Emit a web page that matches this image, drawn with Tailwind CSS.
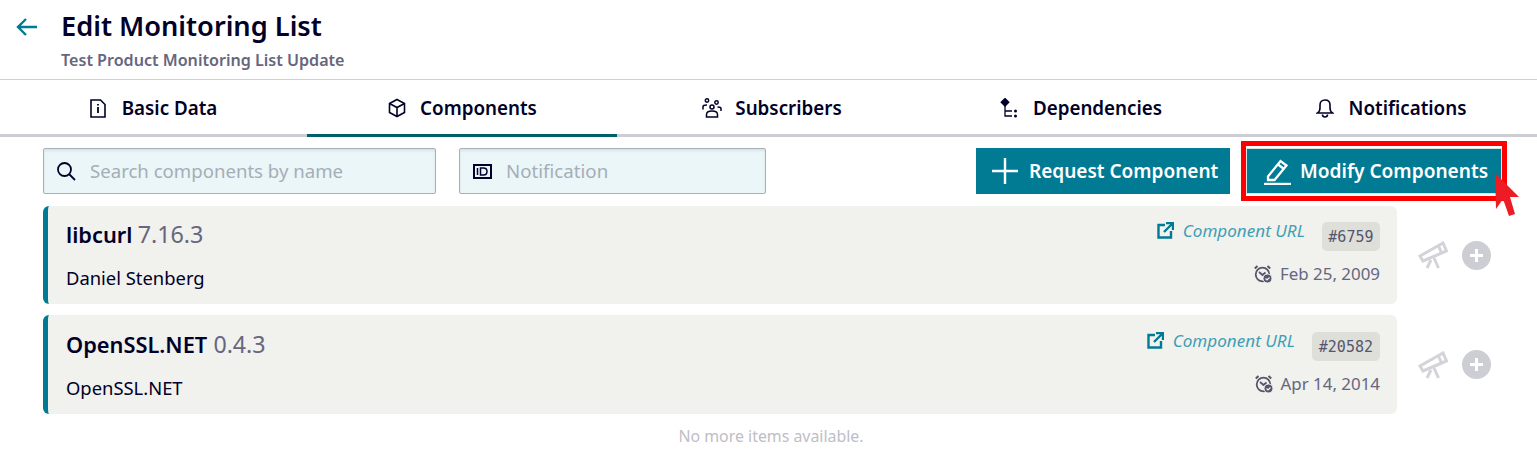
<!DOCTYPE html>
<html lang="en">
<head>
    <meta charset="UTF-8">
    <meta name="viewport" content="width=device-width, initial-scale=1.0">
    <title>Edit Monitoring List</title>
    <script src="https://cdn.jsdelivr.net/npm/@tailwindcss/browser@4"></script>
</head>
<body class="bg-white font-['Noto_Sans',sans-serif] text-[#000028] h-[455px] overflow-hidden">
    <!-- page header -->
    <header class="flex h-[80px] border-b border-[#d0d0d6]">
        <div class="w-[61px] pl-[16px] pt-[17px]">
            <svg class="w-[22px] h-[20px]" viewBox="0 0 22 20" fill="none" stroke="#007b93" stroke-width="2.4"><path d="M21 10H2M10 2l-8 8 8 8"/></svg>
        </div>
        <div>
            <h1 class="text-[27.2px] leading-[36px] font-semibold mt-[8px]">Edit Monitoring List</h1>
            <p class="text-[16.1px] leading-[20px] font-semibold text-[#66667e] mt-[6px]">Test Product Monitoring List Update</p>
        </div>
    </header>

    <!-- tabs -->
    <nav class="grid grid-cols-[307px_310px_310px_310px_310px] h-[57px] border-b-[3px] border-[#cdcdd4] overflow-visible">
        <a class="flex items-center justify-center gap-[16px] h-[57px] font-semibold text-[18.8px] pb-[1px]">
            <svg class="w-[16px] h-[19px]" viewBox="0 0 16 19" fill="none" stroke="#000028" stroke-width="1.6"><path d="M1 1h9.500L15 5.500V18H1z"/><path d="M8 8v6M8 5v1.600" stroke-width="1.800"/></svg>
            Basic Data
        </a>
        <a class="flex items-center justify-center gap-[13px] h-[57px] font-semibold text-[18.8px] pt-[2px] border-b-[3px] border-[#005f6a]">
            <svg class="w-[20px] h-[20px]" viewBox="0 0 20 20" fill="none" stroke="#000028" stroke-width="1.600"><path d="M10 1.500l7.500 4v9l-7.500 4-7.500-4v-9z"/><path d="M2.500 5.500l7.500 4 7.500-4M10 9.500v9"/></svg>
            Components
        </a>
        <a class="flex items-center justify-center gap-[13px] h-[57px] font-semibold text-[18.8px] pb-[1px]">
            <svg class="w-[20px] h-[20px]" viewBox="0 0 20 20" fill="none" stroke="#000028" stroke-width="1.500"><circle cx="5" cy="2.500" r="1.700"/><circle cx="14.500" cy="4.500" r="1.700"/><circle cx="10" cy="9" r="2"/><path d="M1 11.500V8.500c0-1 1-1.500 4-1.500M19 13V10.500c0-1-1-1.500-3.500-1.500"/><path d="M4.500 19v-2.500c0-2 2-3.500 5.500-3.500s5.500 1.500 5.500 3.500V19z"/></svg>
            Subscribers
        </a>
        <a class="flex items-center justify-center gap-[15px] h-[57px] font-semibold text-[18.8px] pb-[1px] pr-[2px]">
            <svg class="w-[18px] h-[20px]" viewBox="0 0 18 20" fill="none" stroke="#000028" stroke-width="1.300"><path d="M5 0.500l3.800 3.800L5 8.100 1.200 4.300z" fill="#000028"/><path d="M5 8v10h7M5 13h7"/><circle cx="15.500" cy="13" r="1.500" fill="#000028" stroke="none"/><circle cx="15.500" cy="18" r="1.500" fill="#000028" stroke="none"/></svg>
            Dependencies
        </a>
        <a class="flex items-center justify-center gap-[15px] h-[57px] font-semibold text-[18.8px] pb-[1px] pr-[2px]">
            <svg class="w-[18px] h-[20px]" viewBox="0 0 18 20" fill="none" stroke="#000028" stroke-width="1.600"><path d="M1.500 15c1.500-1 2.500-2.500 2.500-5V7c0-3 2-5 5-5s5 2 5 5v3c0 2.500 1 4 2.500 5z"/><path d="M6.500 16.500c0 1.500 1 2.500 2.500 2.500s2.500-1 2.500-2.500"/></svg>
            Notifications
        </a>
    </nav>

    <!-- toolbar -->
    <div class="flex items-start pl-[43px] pr-[35px] pt-[11px] relative">
        <label class="flex items-center w-[393px] h-[46px] bg-[#eaf6f7] border border-[#a9afb8] rounded-[2px] pl-[12px] gap-[14px] shadow-[inset_0_2px_3px_rgba(0,0,40,0.08)]">
            <svg class="w-[20px] h-[20px] shrink-0" viewBox="0 0 20 20" fill="none" stroke="#000028" stroke-width="1.800"><circle cx="8.500" cy="8.500" r="6.500"/><path d="M13 13l6 6"/></svg>
            <span class="text-[18.6px] text-[#a6adb8]">Search components by name</span>
        </label>
        <label class="flex items-center w-[307px] h-[46px] ml-[23px] bg-[#eaf6f7] border border-[#a9afb8] rounded-[2px] pl-[13px] gap-[14px] shadow-[inset_0_2px_3px_rgba(0,0,40,0.08)]">
            <svg class="w-[19px] h-[15px] shrink-0" viewBox="0 0 19 15"><rect x="1" y="1" width="17" height="13" fill="none" stroke="#000028" stroke-width="2"/><path d="M4.500 4v7M7.500 4v7h3c2 0 3.500-1.200 3.500-3.500S12.500 4 10.500 4z" fill="none" stroke="#000028" stroke-width="1.500"/></svg>
            <span class="text-[18.7px] text-[#a6adb8]">Notification</span>
        </label>
        <button class="flex items-center w-[254px] h-[46px] ml-auto bg-[#007b93] text-white font-semibold text-[19px] pl-[15px] gap-[10px]">
            <svg class="w-[28px] h-[28px]" viewBox="0 0 28 28" stroke="#fff" stroke-width="2.400"><path d="M14 1v26M1 14h26"/></svg>
            Request Component
        </button>
        <button class="flex items-center w-[256px] h-[46px] ml-[16px] bg-[#007b93] text-white font-semibold text-[19.100px] pl-[16px] gap-[8px] border border-[#d5e6ea]">
            <svg class="w-[29px] h-[28px]" viewBox="0 0 29 28" fill="none" stroke="#fff" stroke-width="2.300"><path d="M5 19.500L17.500 4l6 4.500L11.500 23H5z"/><path d="M15 7.500l6 4.500"/><path d="M1 27h27" stroke-width="2.400"/></svg>
            Modify Components
        </button>
        <!-- annotation drawn over the button -->
        <div class="absolute left-[1241px] top-[4px] w-[266px] h-[60px] border-[5px] border-[#ff0000]"></div>
        <svg class="absolute left-[1493px] top-[34px] w-[28px] h-[48px]" viewBox="0 0 28 48"><path d="M2 2l24 24h-9l5 17-6 2-6-17-7 10z" fill="#ed1c24"/></svg>
    </div>

    <!-- component list -->
    <div class="pl-[43px] pt-[12px]">
        <div class="flex items-center">
            <div class="flex justify-between w-[1354px] h-[98px] bg-[#f1f1ed] border-l-[5px] border-[#007b93] rounded-[6px] pl-[18px] pr-[17px]">
                <div>
                    <p class="leading-[30px] mt-[13px]"><span class="text-[21.800px] font-semibold">libcurl</span> <span class="text-[23.300px] text-[#66667e] ml-[1px]">7.16.3</span></p>
                    <p class="text-[18.400px] leading-[24px] mt-[14px]">Daniel Stenberg</p>
                </div>
                <div class="flex flex-col items-end">
                    <div class="flex items-start mt-[16px]">
                        <svg class="w-[17px] h-[17px]" viewBox="0 0 17 17" fill="none" stroke="#007b93" stroke-width="2.400"><path d="M8 3H1.500v12.500H14V9M9 1h7v7M16 1L7 10"/></svg>
                        <span class="text-[17.100px] italic text-[#3f9fb5] leading-[17px] ml-[9px]">Component URL</span>
                        <span class="bg-[#dfdfda] rounded-[5px] h-[29px] px-[6.500px] ml-[17px] font-['DejaVu_Sans_Mono',monospace] text-[15px] leading-[30px] text-[#55556e]">#6759</span>
                    </div>
                    <div class="flex items-center mt-[10px]">
                        <svg class="w-[18px] h-[18px]" viewBox="0 0 18 18" fill="none" stroke="#55556e" stroke-width="1.800"><circle cx="8.500" cy="9.500" r="6.800"/><path d="M0.800 3.500L3.500 1M16.200 3.500L13.500 1" stroke-width="2"/><path d="M5 7l3.500 3 3-2.500"/><circle cx="13.500" cy="13.500" r="4.500" fill="#55556e" stroke="#f1f1ed" stroke-width="1"/><path d="M11.500 13.500l1.500 1.500 2.500-2.500" stroke="#f1f1ed" stroke-width="1.200"/></svg>
                        <span class="text-[16.900px] text-[#66667e] ml-[8px]">Feb 25, 2009</span>
                    </div>
                </div>
            </div>
            <svg class="w-[30px] h-[28px] ml-[21px]" viewBox="0 0 30 28" fill="none" stroke="#d3d3d9" stroke-width="3"><path d="M2 15L25 2l3.500 8L5 20z"/><path d="M20.500 5l3.500 8"/><path d="M13 19l-4 8M16 17l4.500 10"/></svg>
            <div class="flex items-center justify-center w-[29px] h-[29px] ml-[14px] rounded-full bg-[#cdcdd4]">
                <svg class="w-[15px] h-[15px]" viewBox="0 0 15 15" stroke="#fff" stroke-width="3"><path d="M7.500 1v13M1 7.500h13"/></svg>
            </div>
        </div>

        <div class="flex items-center mt-[11px]">
            <div class="flex justify-between w-[1354px] h-[99px] bg-[#f1f1ed] border-l-[5px] border-[#007b93] rounded-[6px] pl-[18px] pr-[17px]">
                <div>
                    <p class="leading-[30px] mt-[14px]"><span class="text-[21.800px] font-semibold">OpenSSL.NET</span> <span class="text-[23.200px] text-[#66667e] ml-[2px]">0.4.3</span></p>
                    <p class="text-[18.400px] leading-[24px] mt-[14px]">OpenSSL.NET</p>
                </div>
                <div class="flex flex-col items-end">
                    <div class="flex items-start mt-[17px]">
                        <svg class="w-[17px] h-[17px]" viewBox="0 0 17 17" fill="none" stroke="#007b93" stroke-width="2.400"><path d="M8 3H1.500v12.500H14V9M9 1h7v7M16 1L7 10"/></svg>
                        <span class="text-[17.100px] italic text-[#3f9fb5] leading-[17px] ml-[9px]">Component URL</span>
                        <span class="bg-[#dfdfda] rounded-[5px] h-[29px] px-[7px] ml-[17px] font-['DejaVu_Sans_Mono',monospace] text-[15px] leading-[30px] text-[#55556e]">#20582</span>
                    </div>
                    <div class="flex items-center mt-[10px]">
                        <svg class="w-[18px] h-[18px]" viewBox="0 0 18 18" fill="none" stroke="#55556e" stroke-width="1.800"><circle cx="8.500" cy="9.500" r="6.800"/><path d="M0.800 3.500L3.500 1M16.200 3.500L13.500 1" stroke-width="2"/><path d="M5 7l3.500 3 3-2.500"/><circle cx="13.500" cy="13.500" r="4.500" fill="#55556e" stroke="#f1f1ed" stroke-width="1"/><path d="M11.500 13.500l1.500 1.500 2.500-2.500" stroke="#f1f1ed" stroke-width="1.200"/></svg>
                        <span class="text-[16.900px] text-[#66667e] ml-[8px]">Apr 14, 2014</span>
                    </div>
                </div>
            </div>
            <svg class="w-[30px] h-[28px] ml-[21px]" viewBox="0 0 30 28" fill="none" stroke="#d3d3d9" stroke-width="3"><path d="M2 15L25 2l3.500 8L5 20z"/><path d="M20.500 5l3.500 8"/><path d="M13 19l-4 8M16 17l4.500 10"/></svg>
            <div class="flex items-center justify-center w-[29px] h-[29px] ml-[14px] rounded-full bg-[#cdcdd4]">
                <svg class="w-[15px] h-[15px]" viewBox="0 0 15 15" stroke="#fff" stroke-width="3"><path d="M7.500 1v13M1 7.500h13"/></svg>
            </div>
        </div>

        <p class="w-[1456px] text-center text-[15.900px] text-[#bebec6] mt-[11px]">No more items available.</p>
    </div>
</body>
</html>
